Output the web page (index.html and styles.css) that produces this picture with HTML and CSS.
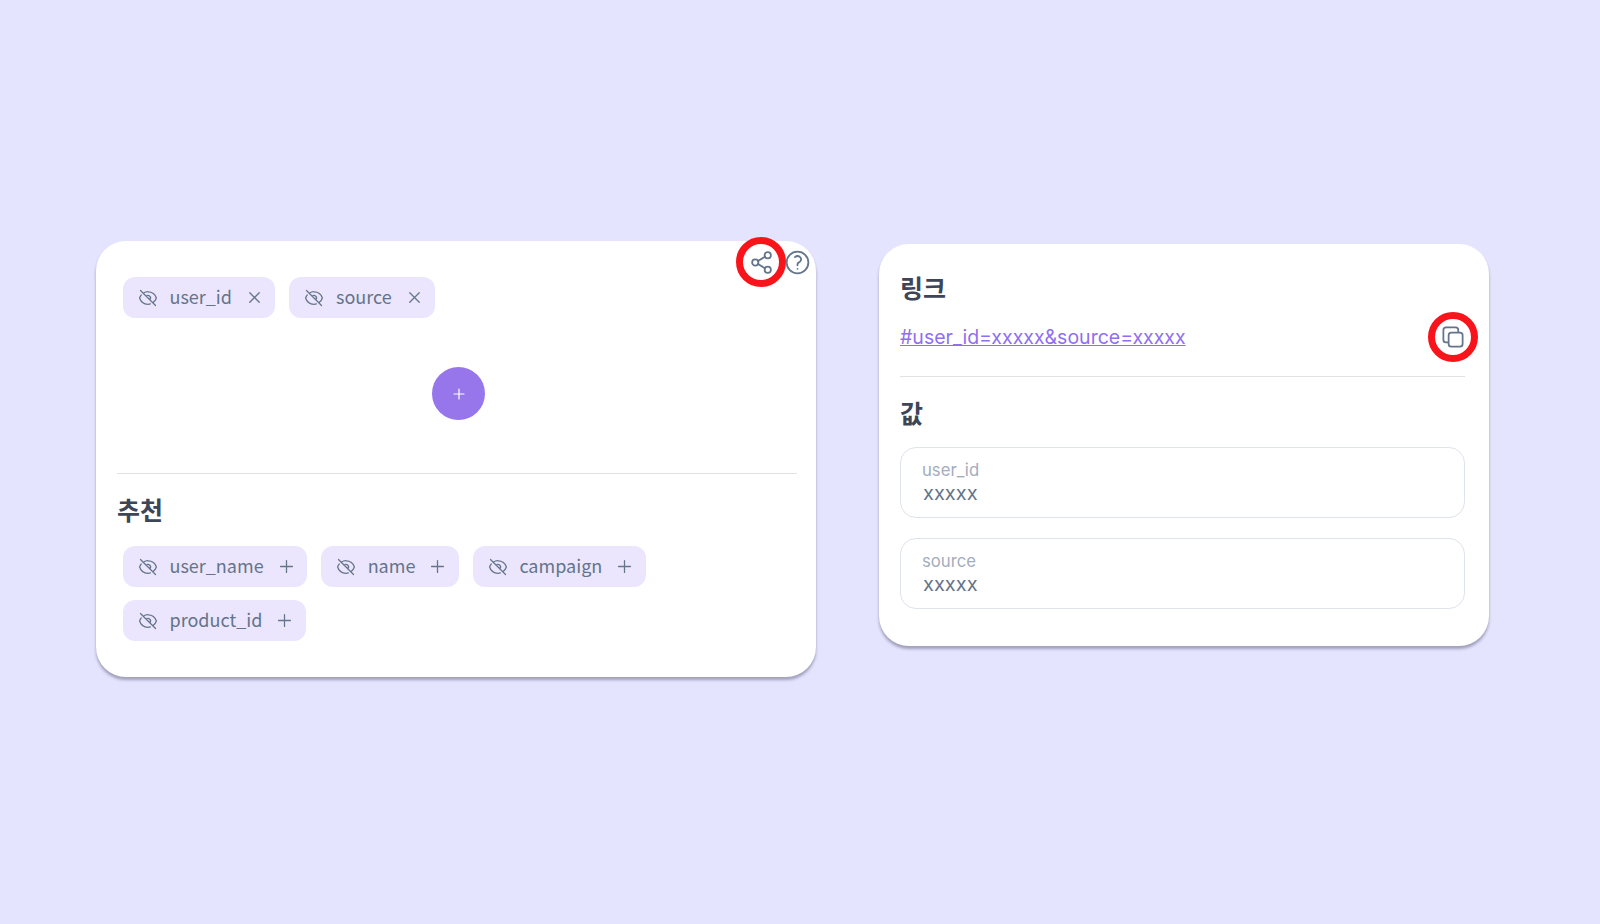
FILE: index.html
```html
<!DOCTYPE html>
<html lang="ko">
<head>
    <meta charset="UTF-8">
    <meta name="viewport" content="width=device-width, initial-scale=1.0">
    <title>링크 공유</title>
    <link rel="stylesheet" href="styles.css">
</head>
<body>
    <svg class="icon-defs" aria-hidden="true">
        <symbol id="i-eye-off" viewBox="0 0 24 24">
            <path d="M3.98 8.223A10.477 10.477 0 0 0 1.934 12C3.226 16.338 7.244 19.5 12 19.5c.993 0 1.953-.138 2.863-.395M6.228 6.228A10.45 10.45 0 0 1 12 4.5c4.756 0 8.773 3.162 10.065 7.498a10.522 10.522 0 0 1-4.293 5.774M6.228 6.228 3 3m3.228 3.228 3.65 3.65m7.894 7.894L21 21m-3.228-3.228-3.65-3.65m0 0a3 3 0 1 0-4.243-4.243m4.242 4.242L9.88 9.88"/>
        </symbol>
        <symbol id="i-x" viewBox="0 0 24 24">
            <path d="M6 18 18 6M6 6l12 12"/>
        </symbol>
        <symbol id="i-plus" viewBox="0 0 24 24">
            <path d="M12 4.5v15m7.5-7.5h-15"/>
        </symbol>
    </svg>

    <div class="page">
        <div class="card card-build">
            <div class="card-actions">
                <button class="icon-btn marked">
                    <svg class="icon icon-share" viewBox="0 0 24 24">
                        <circle cx="18" cy="5" r="3"/>
                        <circle cx="6" cy="12" r="3"/>
                        <circle cx="18" cy="19" r="3"/>
                        <path d="M8.6 13.5l6.8 4M15.4 6.5l-6.8 4"/>
                    </svg>
                </button>
                <button class="icon-btn">
                    <svg class="icon icon-help" viewBox="0 0 24 24"><path d="M9.879 7.519c1.171-1.025 3.071-1.025 4.242 0 1.172 1.025 1.172 2.687 0 3.712-.203.179-.43.326-.67.442-.745.361-1.45.999-1.45 1.827v.75M21 12a9 9 0 1 1-18 0 9 9 0 0 1 18 0Zm-9 5.25h.008v.008H12v-.008Z"/></svg>
                </button>
            </div>

            <div class="chips">
                <div class="chip">
                    <svg class="chip-eye"><use href="#i-eye-off"/></svg>
                    <span class="chip-name">user_id</span>
                    <svg class="chip-action"><use href="#i-x"/></svg>
                </div>
                <div class="chip">
                    <svg class="chip-eye"><use href="#i-eye-off"/></svg>
                    <span class="chip-name">source</span>
                    <svg class="chip-action"><use href="#i-x"/></svg>
                </div>
            </div>

            <div class="add-row">
                <button class="add-btn">
                    <svg class="add-icon"><use href="#i-plus"/></svg>
                </button>
            </div>

            <hr class="divider">

            <h2 class="title title-suggest">추천</h2>
            <div class="chips">
                <div class="chip">
                    <svg class="chip-eye"><use href="#i-eye-off"/></svg>
                    <span class="chip-name">user_name</span>
                    <svg class="chip-action"><use href="#i-plus"/></svg>
                </div>
                <div class="chip">
                    <svg class="chip-eye"><use href="#i-eye-off"/></svg>
                    <span class="chip-name">name</span>
                    <svg class="chip-action"><use href="#i-plus"/></svg>
                </div>
                <div class="chip">
                    <svg class="chip-eye"><use href="#i-eye-off"/></svg>
                    <span class="chip-name">campaign</span>
                    <svg class="chip-action"><use href="#i-plus"/></svg>
                </div>
                <div class="chip">
                    <svg class="chip-eye"><use href="#i-eye-off"/></svg>
                    <span class="chip-name">product_id</span>
                    <svg class="chip-action"><use href="#i-plus"/></svg>
                </div>
            </div>
        </div>

        <div class="card card-result">
            <h2 class="title">링크</h2>
            <div class="link-row">
                <a class="link" href="#user_id=xxxxx&amp;source=xxxxx">#user_id=xxxxx&amp;source=xxxxx</a>
                <button class="icon-btn marked">
                    <svg class="icon icon-copy" viewBox="0 0 24 24"><path d="M16.5 8.25V6a2.25 2.25 0 0 0-2.25-2.25H6A2.25 2.25 0 0 0 3.75 6v8.25A2.25 2.25 0 0 0 6 16.5h2.25m8.25-8.25H18a2.25 2.25 0 0 1 2.25 2.25V18A2.25 2.25 0 0 1 18 20.25h-7.5A2.25 2.25 0 0 1 8.25 18v-1.5m8.25-8.25h-6a2.25 2.25 0 0 0-2.25 2.25v6"/></svg>
                </button>
            </div>

            <hr class="divider">

            <h2 class="title title-values">값</h2>
            <div class="field">
                <span class="field-label">user_id</span>
                <span class="field-value">xxxxx</span>
            </div>
            <div class="field">
                <span class="field-label">source</span>
                <span class="field-value">xxxxx</span>
            </div>
        </div>
    </div>
</body>
</html>
```

FILE: styles.css
```css
* {
    margin: 0;
    padding: 0;
    box-sizing: border-box;
}

body {
    font-family: Inter, "Noto Sans CJK KR", sans-serif;
    background: #e5e4ff;
    min-height: 100vh;
    overflow: hidden;
}

.icon-defs {
    display: none;
}

.page {
    display: flex;
    align-items: flex-start;
    gap: 63px;
    padding: 241px 0 0 96px;
}

.card {
    position: relative;
    background: white;
    border-radius: 30px;
    box-shadow: 0 3px 3px rgba(50, 50, 80, 0.38);
}

.card-build {
    width: 720px;
    height: 436px;
    padding: 36px 19px 0 21px;
}

.card-result {
    width: 610px;
    height: 402px;
    margin-top: 3px;
    padding: 27px 24px 0 21px;
}

.card-actions {
    position: absolute;
    top: 0;
    right: 1px;
    display: flex;
    align-items: center;
}

.icon-btn {
    position: relative;
    display: flex;
    align-items: center;
    justify-content: center;
    width: 36px;
    height: 42px;
    background: none;
    border: none;
    cursor: pointer;
}

/* red ring marking the button */
.marked::after {
    content: "";
    position: absolute;
    top: 50%;
    left: 50%;
    box-sizing: border-box;
    width: 50px;
    height: 50px;
    margin: -25px 0 0 -25px;
    border: 7px solid #f8141a;
    border-radius: 50%;
}

.icon {
    fill: none;
    stroke: #64748b;
    stroke-width: 1.5;
    stroke-linecap: round;
    stroke-linejoin: round;
}

.icon-share {
    width: 25px;
    height: 25px;
    stroke-width: 1.7;
}

.icon-help {
    width: 29px;
    height: 29px;
}

.icon-copy {
    width: 28px;
    height: 28px;
}

.chips {
    display: flex;
    flex-wrap: wrap;
    gap: 13px 14px;
    padding-left: 6px;
}

.chip {
    display: flex;
    align-items: center;
    height: 41px;
    padding: 0 11.5px 0 15px;
    background: #ebe6fd;
    border-radius: 12px;
    color: #64748b;
    font-family: "Noto Sans CJK KR", "Noto Sans", sans-serif;
    font-size: 18px;
}

.chip-name {
    position: relative;
    top: -2px;
}

.chip-eye {
    width: 20px;
    height: 20px;
    margin-right: 11.5px;
    fill: none;
    stroke: #64748b;
    stroke-width: 1.5;
    stroke-linecap: round;
    stroke-linejoin: round;
}

.chip-action {
    width: 19px;
    height: 19px;
    margin-left: 13px;
    fill: none;
    stroke: #64748b;
    stroke-width: 1.6;
    stroke-linecap: round;
    stroke-linejoin: round;
}

.add-row {
    display: flex;
    justify-content: center;
    margin: 49px 0 53px;
    padding-left: 3px;
}

.add-btn {
    display: flex;
    align-items: center;
    justify-content: center;
    width: 53px;
    height: 53px;
    background: #9676ea;
    border: none;
    border-radius: 50%;
    cursor: pointer;
}

.add-icon {
    width: 16px;
    height: 16px;
    fill: none;
    stroke: white;
    stroke-width: 1.8;
    stroke-linecap: round;
}

.divider {
    border: none;
    border-top: 1.5px solid #e2e2e6;
}

.title {
    color: #3c4658;
    font-family: "Noto Sans CJK KR", sans-serif;
    font-size: 25px;
    font-weight: 600;
    line-height: 32px;
}

.title-suggest {
    margin: 19px 0 21px;
}

.title-values {
    margin: 19px 0 19px;
}

.link-row {
    display: flex;
    align-items: center;
    justify-content: space-between;
    height: 42px;
    margin: 13px -6px 18px 0;
}

.link {
    color: #8f6ff0;
    font-size: 19.5px;
}

.field {
    display: flex;
    flex-direction: column;
    height: 71px;
    margin-bottom: 20px;
    padding: 11px 21px 0;
    border: 1.5px solid #dfe3ec;
    border-radius: 16px;
}

.field-label {
    color: #a3adbd;
    font-size: 16.7px;
    line-height: 22px;
}

.field-value {
    margin-left: 1px;
    color: #64748b;
    font-size: 20px;
    line-height: 25px;
}
```
